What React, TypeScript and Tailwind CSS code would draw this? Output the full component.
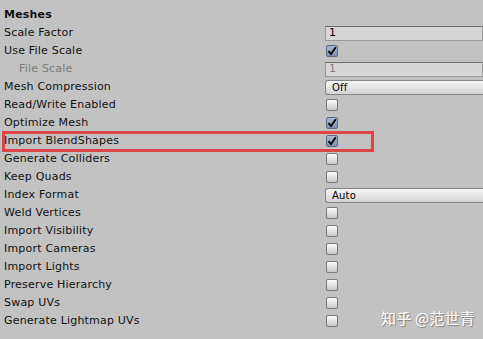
const rows: { label: string; kind: "field" | "check" | "dropdown"; value?: string; checked?: boolean; disabled?: boolean }[] = [
  { label: "Scale Factor", kind: "field", value: "1" },
  { label: "Use File Scale", kind: "check", checked: true },
  { label: "File Scale", kind: "field", value: "1", disabled: true },
  { label: "Mesh Compression", kind: "dropdown", value: "Off" },
  { label: "Read/Write Enabled", kind: "check" },
  { label: "Optimize Mesh", kind: "check", checked: true },
  { label: "Import BlendShapes", kind: "check", checked: true },
  { label: "Generate Colliders", kind: "check" },
  { label: "Keep Quads", kind: "check" },
  { label: "Index Format", kind: "dropdown", value: "Auto" },
  { label: "Weld Vertices", kind: "check" },
  { label: "Import Visibility", kind: "check" },
  { label: "Import Cameras", kind: "check" },
  { label: "Import Lights", kind: "check" },
  { label: "Preserve Hierarchy", kind: "check" },
  { label: "Swap UVs", kind: "check" },
  { label: "Generate Lightmap UVs", kind: "check" },
];

const Check = ({ checked }: { checked?: boolean }) => (
  <div
    className={
      checked
        ? "w-[12px] h-[12px] rounded-[2px] border border-[#5d6a82] bg-gradient-to-b from-[#a9b7d2] to-[#7d8fb2] flex items-center justify-center"
        : "w-[12px] h-[12px] rounded-[2px] border border-[#7a7a7a] bg-gradient-to-b from-[#fafafa] to-[#c9c9c9]"
    }
  >
    {checked && (
      <svg width="10" height="10" viewBox="0 0 10 10">
        <path d="M1.5 5.2 L4 8 L8.8 1.3" fill="none" stroke="#000" strokeWidth="1.8" />
      </svg>
    )}
  </div>
);

const App = () => {
  return (
    <div className="relative w-[483px] h-[339px] overflow-hidden bg-[#c2c2c2] text-[11px] tracking-[0.2px] text-[#111] font-['DejaVu_Sans',sans-serif] pt-[6px]">
      <div className="h-[18px] flex items-center pl-[4px] font-bold">Meshes</div>
      {rows.map((r) => (
        <div key={r.label} className="h-[18px] flex items-center">
          <div className={`w-[325px] shrink-0 ${r.disabled ? "pl-[19px] text-[#7c7c7c]" : "pl-[4px]"}`}>{r.label}</div>
          {r.kind === "check" && (
            <div className="pl-[1px]">
              <Check checked={r.checked} />
            </div>
          )}
          {r.kind === "field" && (
            <div
              className={`flex-1 h-[15px] border border-[#9a9a9a] border-t-[#6f6f6f] bg-[#d6d6d6] pl-[3px] flex items-center ${r.disabled ? "text-[#7c7c7c]" : "text-black"}`}
            >
              {r.value}
            </div>
          )}
          {r.kind === "dropdown" && (
            <div className="flex-1 h-[15px] border border-r-0 border-[#858585] rounded-l-[3px] bg-gradient-to-b from-[#f6f6f6] to-[#d3d3d3] pl-[6px] flex items-center text-[10px] text-black">
              {r.value}
            </div>
          )}
        </div>
      ))}
      <div className="absolute left-[2px] top-[131px] w-[372px] h-[21px] border-[3px] border-[#e04545]" />
      <div className="absolute left-[381px] top-[307px] text-[15px] text-white font-['Noto_Sans_CJK_SC',sans-serif] [text-shadow:1px_1px_1px_rgba(0,0,0,0.35)]">
        知乎 @范世青
      </div>
    </div>
  );
};

export default App;
